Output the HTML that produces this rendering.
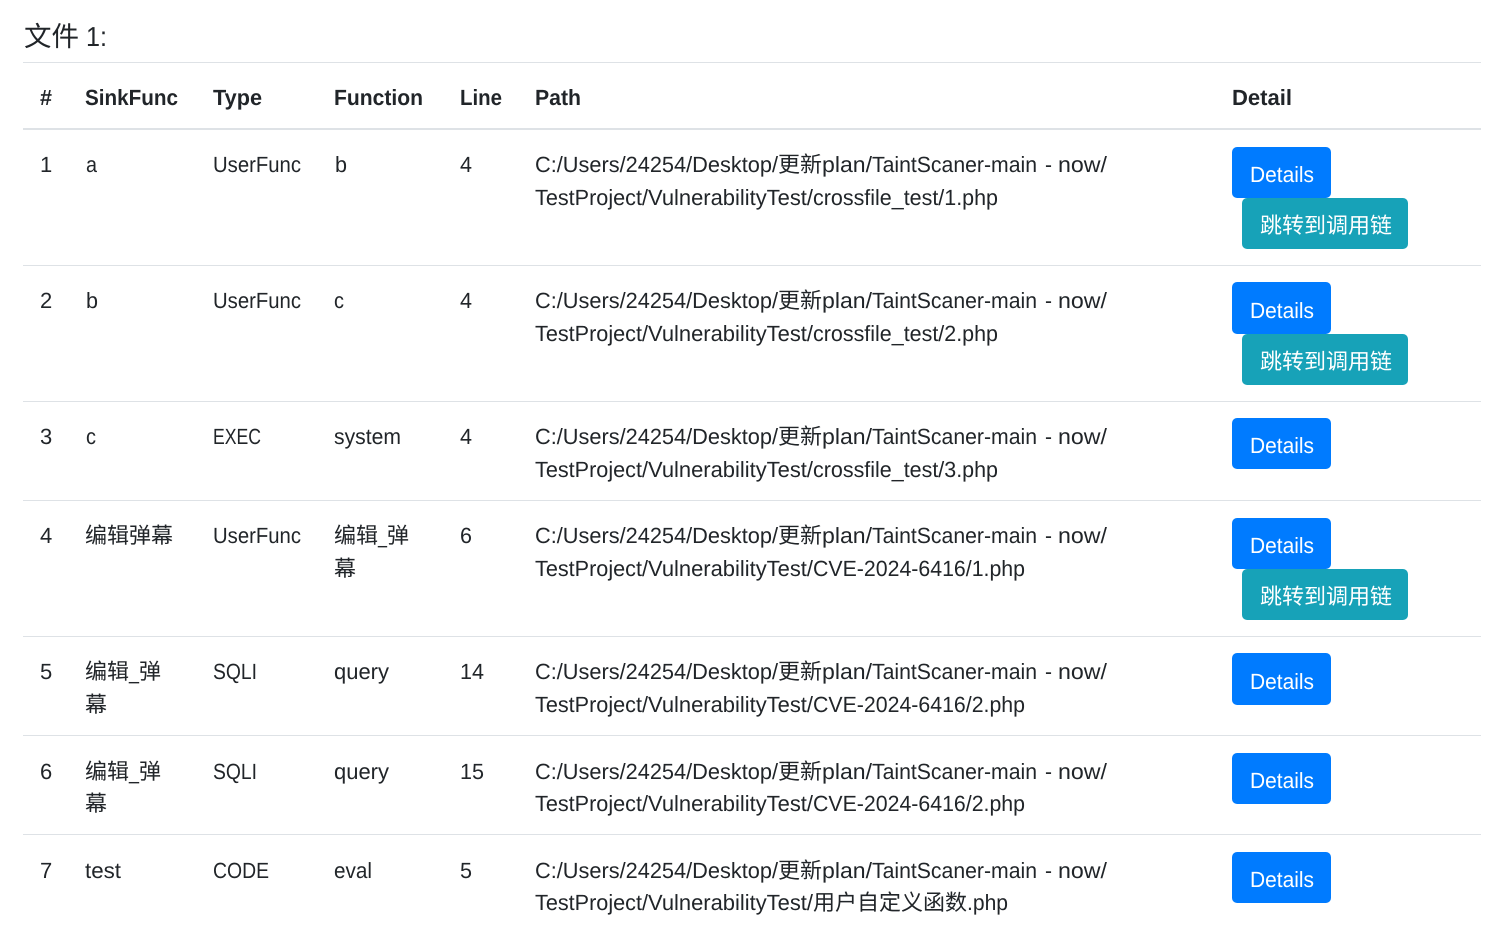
<!DOCTYPE html>
<html lang="zh"><head><meta charset="utf-8"><title>文件 1</title>
<style>
html,body{margin:0;padding:0;background:#fff;width:1485px;height:951px;overflow:hidden}
svg{display:block}
text{font-family:"Liberation Sans","Noto Sans CJK SC",sans-serif;font-size:22px;fill:#212529;text-rendering:geometricPrecision}
.c{font-family:"Noto Sans CJK SC","Liberation Sans",sans-serif;font-weight:400}
.b{font-weight:700}
.w{fill:#fff}
</style></head><body>
<svg width="1485" height="951" viewBox="0 0 1485 951" xmlns="http://www.w3.org/2000/svg">
<g fill="#dee2e6">
<rect x="23" y="62" width="1458" height="1"/>
<rect x="23" y="128" width="1458" height="2"/>
<rect x="23" y="265" width="1458" height="1"/>
<rect x="23" y="401" width="1458" height="1"/>
<rect x="23" y="500" width="1458" height="1"/>
<rect x="23" y="636" width="1458" height="1"/>
<rect x="23" y="735" width="1458" height="1"/>
<rect x="23" y="834" width="1458" height="1"/>
</g>
<text class="c" x="24" y="46" style="font-size:27.5px">文件</text>
<text x="86" y="46" style="font-size:27.5px" textLength="21" lengthAdjust="spacingAndGlyphs">1:</text>

<g>
<text class="b" x="40" y="105" textLength="12" lengthAdjust="spacingAndGlyphs">#</text>
<text class="b" x="85" y="105" textLength="93" lengthAdjust="spacingAndGlyphs">SinkFunc</text>
<text class="b" x="213" y="105" textLength="49" lengthAdjust="spacingAndGlyphs">Type</text>
<text class="b" x="334" y="105" textLength="89" lengthAdjust="spacingAndGlyphs">Function</text>
<text class="b" x="460" y="105" textLength="42" lengthAdjust="spacingAndGlyphs">Line</text>
<text class="b" x="535" y="105" textLength="46" lengthAdjust="spacingAndGlyphs">Path</text>
<text class="b" x="1232" y="105" textLength="60" lengthAdjust="spacingAndGlyphs">Detail</text>
</g>

<!-- Row 1 -->
<text x="40" y="172">1</text>
<text x="86" y="172" textLength="11" lengthAdjust="spacingAndGlyphs">a</text>
<text x="213" y="172" textLength="88" lengthAdjust="spacingAndGlyphs">UserFunc</text>
<text x="335" y="172" textLength="12" lengthAdjust="spacingAndGlyphs">b</text>
<text x="460" y="172" textLength="12" lengthAdjust="spacingAndGlyphs">4</text>
<text x="535" y="172" textLength="243" lengthAdjust="spacingAndGlyphs">C:/Users/24254/Desktop/</text>
<text class="c" x="778" y="172">更新</text>
<text x="822" y="172" textLength="50" lengthAdjust="spacingAndGlyphs">plan/</text>
<text x="872" y="172" textLength="165" lengthAdjust="spacingAndGlyphs">TaintScaner-main</text>
<text x="1045" y="172" textLength="7" lengthAdjust="spacingAndGlyphs">-</text>
<text x="1058" y="172" textLength="49" lengthAdjust="spacingAndGlyphs">now/</text>
<text x="535" y="205" textLength="113" lengthAdjust="spacingAndGlyphs">TestProject/</text>
<text x="648" y="205" textLength="165" lengthAdjust="spacingAndGlyphs">VulnerabilityTest/</text>
<text x="813" y="205" textLength="185" lengthAdjust="spacingAndGlyphs">crossfile_test/1.php</text>
<rect x="1232" y="147" width="99" height="51" rx="5" fill="#007bff"/>
<text class="w" x="1250" y="182" textLength="64" lengthAdjust="spacingAndGlyphs">Details</text>
<rect x="1242" y="198" width="166" height="51" rx="5" fill="#17a2b8"/>
<text class="c w" x="1260" y="233">跳转到调用链</text>

<!-- Row 2 -->
<text x="40" y="308">2</text>
<text x="86" y="308" textLength="12" lengthAdjust="spacingAndGlyphs">b</text>
<text x="213" y="308" textLength="88" lengthAdjust="spacingAndGlyphs">UserFunc</text>
<text x="334" y="308" textLength="10" lengthAdjust="spacingAndGlyphs">c</text>
<text x="460" y="308" textLength="12" lengthAdjust="spacingAndGlyphs">4</text>
<text x="535" y="308" textLength="243" lengthAdjust="spacingAndGlyphs">C:/Users/24254/Desktop/</text>
<text class="c" x="778" y="308">更新</text>
<text x="822" y="308" textLength="50" lengthAdjust="spacingAndGlyphs">plan/</text>
<text x="872" y="308" textLength="165" lengthAdjust="spacingAndGlyphs">TaintScaner-main</text>
<text x="1045" y="308" textLength="7" lengthAdjust="spacingAndGlyphs">-</text>
<text x="1058" y="308" textLength="49" lengthAdjust="spacingAndGlyphs">now/</text>
<text x="535" y="341" textLength="113" lengthAdjust="spacingAndGlyphs">TestProject/</text>
<text x="648" y="341" textLength="165" lengthAdjust="spacingAndGlyphs">VulnerabilityTest/</text>
<text x="813" y="341" textLength="185" lengthAdjust="spacingAndGlyphs">crossfile_test/2.php</text>
<rect x="1232" y="282" width="99" height="52" rx="5" fill="#007bff"/>
<text class="w" x="1250" y="318" textLength="64" lengthAdjust="spacingAndGlyphs">Details</text>
<rect x="1242" y="334" width="166" height="51" rx="5" fill="#17a2b8"/>
<text class="c w" x="1260" y="369">跳转到调用链</text>

<!-- Row 3 -->
<text x="40" y="444">3</text>
<text x="86" y="444" textLength="10" lengthAdjust="spacingAndGlyphs">c</text>
<text x="213" y="444" textLength="48" lengthAdjust="spacingAndGlyphs">EXEC</text>
<text x="334" y="444" textLength="67" lengthAdjust="spacingAndGlyphs">system</text>
<text x="460" y="444" textLength="12" lengthAdjust="spacingAndGlyphs">4</text>
<text x="535" y="444" textLength="243" lengthAdjust="spacingAndGlyphs">C:/Users/24254/Desktop/</text>
<text class="c" x="778" y="444">更新</text>
<text x="822" y="444" textLength="50" lengthAdjust="spacingAndGlyphs">plan/</text>
<text x="872" y="444" textLength="165" lengthAdjust="spacingAndGlyphs">TaintScaner-main</text>
<text x="1045" y="444" textLength="7" lengthAdjust="spacingAndGlyphs">-</text>
<text x="1058" y="444" textLength="49" lengthAdjust="spacingAndGlyphs">now/</text>
<text x="535" y="477" textLength="113" lengthAdjust="spacingAndGlyphs">TestProject/</text>
<text x="648" y="477" textLength="165" lengthAdjust="spacingAndGlyphs">VulnerabilityTest/</text>
<text x="813" y="477" textLength="185" lengthAdjust="spacingAndGlyphs">crossfile_test/3.php</text>
<rect x="1232" y="418" width="99" height="51" rx="5" fill="#007bff"/>
<text class="w" x="1250" y="453" textLength="64" lengthAdjust="spacingAndGlyphs">Details</text>

<!-- Row 4 -->
<text x="40" y="543">4</text>
<text class="c" x="85" y="543">编辑弹幕</text>
<text x="213" y="543" textLength="88" lengthAdjust="spacingAndGlyphs">UserFunc</text>
<text class="c" x="334" y="543">编辑</text>
<text x="378" y="543" textLength="9" lengthAdjust="spacingAndGlyphs">_</text>
<text class="c" x="387" y="543">弹</text>
<text class="c" x="334" y="576">幕</text>
<text x="460" y="543" textLength="12" lengthAdjust="spacingAndGlyphs">6</text>
<text x="535" y="543" textLength="243" lengthAdjust="spacingAndGlyphs">C:/Users/24254/Desktop/</text>
<text class="c" x="778" y="543">更新</text>
<text x="822" y="543" textLength="50" lengthAdjust="spacingAndGlyphs">plan/</text>
<text x="872" y="543" textLength="165" lengthAdjust="spacingAndGlyphs">TaintScaner-main</text>
<text x="1045" y="543" textLength="7" lengthAdjust="spacingAndGlyphs">-</text>
<text x="1058" y="543" textLength="49" lengthAdjust="spacingAndGlyphs">now/</text>
<text x="535" y="576" textLength="113" lengthAdjust="spacingAndGlyphs">TestProject/</text>
<text x="648" y="576" textLength="165" lengthAdjust="spacingAndGlyphs">VulnerabilityTest/</text>
<text x="813" y="576" textLength="212" lengthAdjust="spacingAndGlyphs">CVE-2024-6416/1.php</text>
<rect x="1232" y="518" width="99" height="51" rx="5" fill="#007bff"/>
<text class="w" x="1250" y="553" textLength="64" lengthAdjust="spacingAndGlyphs">Details</text>
<rect x="1242" y="569" width="166" height="51" rx="5" fill="#17a2b8"/>
<text class="c w" x="1260" y="604">跳转到调用链</text>

<!-- Row 5 -->
<text x="40" y="679">5</text>
<text class="c" x="85" y="679">编辑</text>
<text x="129" y="679" textLength="10" lengthAdjust="spacingAndGlyphs">_</text>
<text class="c" x="139" y="679">弹</text>
<text class="c" x="85" y="712">幕</text>
<text x="213" y="679" textLength="44" lengthAdjust="spacingAndGlyphs">SQLI</text>
<text x="334" y="679" textLength="55" lengthAdjust="spacingAndGlyphs">query</text>
<text x="460" y="679" textLength="24" lengthAdjust="spacingAndGlyphs">14</text>
<text x="535" y="679" textLength="243" lengthAdjust="spacingAndGlyphs">C:/Users/24254/Desktop/</text>
<text class="c" x="778" y="679">更新</text>
<text x="822" y="679" textLength="50" lengthAdjust="spacingAndGlyphs">plan/</text>
<text x="872" y="679" textLength="165" lengthAdjust="spacingAndGlyphs">TaintScaner-main</text>
<text x="1045" y="679" textLength="7" lengthAdjust="spacingAndGlyphs">-</text>
<text x="1058" y="679" textLength="49" lengthAdjust="spacingAndGlyphs">now/</text>
<text x="535" y="712" textLength="113" lengthAdjust="spacingAndGlyphs">TestProject/</text>
<text x="648" y="712" textLength="165" lengthAdjust="spacingAndGlyphs">VulnerabilityTest/</text>
<text x="813" y="712" textLength="212" lengthAdjust="spacingAndGlyphs">CVE-2024-6416/2.php</text>
<rect x="1232" y="653" width="99" height="52" rx="5" fill="#007bff"/>
<text class="w" x="1250" y="689" textLength="64" lengthAdjust="spacingAndGlyphs">Details</text>

<!-- Row 6 -->
<text x="40" y="779">6</text>
<text class="c" x="85" y="779">编辑</text>
<text x="129" y="779" textLength="10" lengthAdjust="spacingAndGlyphs">_</text>
<text class="c" x="139" y="779">弹</text>
<text class="c" x="85" y="811">幕</text>
<text x="213" y="779" textLength="44" lengthAdjust="spacingAndGlyphs">SQLI</text>
<text x="334" y="779" textLength="55" lengthAdjust="spacingAndGlyphs">query</text>
<text x="460" y="779" textLength="24" lengthAdjust="spacingAndGlyphs">15</text>
<text x="535" y="779" textLength="243" lengthAdjust="spacingAndGlyphs">C:/Users/24254/Desktop/</text>
<text class="c" x="778" y="779">更新</text>
<text x="822" y="779" textLength="50" lengthAdjust="spacingAndGlyphs">plan/</text>
<text x="872" y="779" textLength="165" lengthAdjust="spacingAndGlyphs">TaintScaner-main</text>
<text x="1045" y="779" textLength="7" lengthAdjust="spacingAndGlyphs">-</text>
<text x="1058" y="779" textLength="49" lengthAdjust="spacingAndGlyphs">now/</text>
<text x="535" y="811" textLength="113" lengthAdjust="spacingAndGlyphs">TestProject/</text>
<text x="648" y="811" textLength="165" lengthAdjust="spacingAndGlyphs">VulnerabilityTest/</text>
<text x="813" y="811" textLength="212" lengthAdjust="spacingAndGlyphs">CVE-2024-6416/2.php</text>
<rect x="1232" y="753" width="99" height="51" rx="5" fill="#007bff"/>
<text class="w" x="1250" y="788" textLength="64" lengthAdjust="spacingAndGlyphs">Details</text>

<!-- Row 7 -->
<text x="40" y="878">7</text>
<text x="85" y="878" textLength="36" lengthAdjust="spacingAndGlyphs">test</text>
<text x="213" y="878" textLength="56" lengthAdjust="spacingAndGlyphs">CODE</text>
<text x="334" y="878" textLength="38" lengthAdjust="spacingAndGlyphs">eval</text>
<text x="460" y="878" textLength="12" lengthAdjust="spacingAndGlyphs">5</text>
<text x="535" y="878" textLength="243" lengthAdjust="spacingAndGlyphs">C:/Users/24254/Desktop/</text>
<text class="c" x="778" y="878">更新</text>
<text x="822" y="878" textLength="50" lengthAdjust="spacingAndGlyphs">plan/</text>
<text x="872" y="878" textLength="165" lengthAdjust="spacingAndGlyphs">TaintScaner-main</text>
<text x="1045" y="878" textLength="7" lengthAdjust="spacingAndGlyphs">-</text>
<text x="1058" y="878" textLength="49" lengthAdjust="spacingAndGlyphs">now/</text>
<text x="535" y="910" textLength="113" lengthAdjust="spacingAndGlyphs">TestProject/</text>
<text x="648" y="910" textLength="165" lengthAdjust="spacingAndGlyphs">VulnerabilityTest/</text>
<text class="c" x="813" y="910">用户自定义函数</text>
<text x="967" y="910" textLength="41" lengthAdjust="spacingAndGlyphs">.php</text>
<rect x="1232" y="852" width="99" height="51" rx="5" fill="#007bff"/>
<text class="w" x="1250" y="887" textLength="64" lengthAdjust="spacingAndGlyphs">Details</text>
</svg>
</body></html>
